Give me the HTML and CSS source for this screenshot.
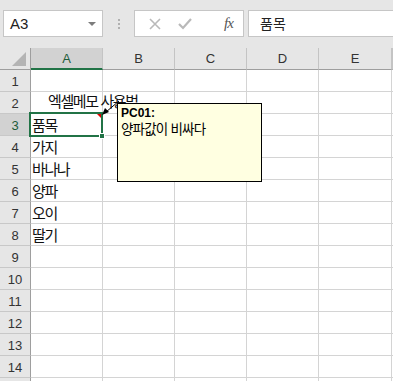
FILE: index.html
```
<!DOCTYPE html>
<html lang="ko">
<head>
    <meta charset="UTF-8">
    <meta name="viewport" content="width=device-width, initial-scale=1.0">
    <title>엑셀메모 사용법</title>
    <link rel="stylesheet" href="styles.css">
</head>
<body>
    <div class="app">
        <!-- Name box + formula bar -->
        <div class="toolbar">
            <div class="name-box">
                <span class="name-text">A3</span>
                <span class="name-arrow"></span>
            </div>
            <div class="grip"><i></i><i></i><i></i></div>
            <div class="fx-buttons">
                <svg class="fx-icon" width="12" height="12" viewBox="0 0 12 12">
                    <path d="M1 1 L11 11 M11 1 L1 11" stroke="#b9b9b9" stroke-width="1.6" fill="none"/>
                </svg>
                <svg class="fx-icon" width="14" height="12" viewBox="0 0 14 12">
                    <path d="M1 6 L5 10 L13 1" stroke="#b9b9b9" stroke-width="2.2" fill="none"/>
                </svg>
                <span class="fx-label">fx</span>
            </div>
            <div class="formula-input">품목</div>
        </div>

        <!-- Sheet grid -->
        <div class="sheet">
            <div class="hdr corner"><span class="corner-tri"></span></div>
            <div class="hdr col active">A</div>
            <div class="hdr col">B</div>
            <div class="hdr col">C</div>
            <div class="hdr col">D</div>
            <div class="hdr col">E</div>
            <div class="hdr col rest"></div>
        </div>

        <div class="selection"><span class="fill-handle"></span></div>
        <span class="comment-mark"></span>

        <svg class="arrow" width="30" height="22" viewBox="0 0 30 22">
            <path d="M19 2 L6 13" stroke="#000" stroke-width="1" fill="none"/>
            <path d="M2 16 L5 9 L9 13 Z" fill="#000"/>
        </svg>

        <div class="comment">
            <div class="comment-author">PC01:</div>
            <div class="comment-text">양파값이 비싸다</div>
        </div>
    </div>

    <script>
        // A열 데이터
        const cells = {
            2: '엑셀메모 사용법',
            3: '품목',
            4: '가지',
            5: '바나나',
            6: '양파',
            7: '오이',
            8: '딸기'
        };

        const sheet = document.querySelector('.sheet');
        let html = '';
        for (let r = 1; r <= 15; r++) {
            html += `<div class="hdr row${r === 3 ? ' active' : ''}">${r}</div>`;
            const text = cells[r] || '';
            html += `<div class="cell${r === 2 ? ' title' : ''}">${text}</div>`;
            html += '<div class="cell"></div><div class="cell"></div><div class="cell"></div><div class="cell"></div><div class="cell rest"></div>';
        }
        sheet.insertAdjacentHTML('beforeend', html);
    </script>
</body>
</html>
```

FILE: styles.css
```
:root {
    --excel-green: #217346;
    --grid: #d4d4d4;
    --header-bg: #e6e6e6;
    --header-line: #9e9e9e;
}

* {
    margin: 0;
    padding: 0;
    box-sizing: border-box;
}

body {
    font-family: 'Liberation Sans', 'Noto Sans CJK KR', sans-serif;
    background: white;
    color: #222;
    overflow: hidden;
}

.app {
    position: relative;
    width: 393px;
    height: 381px;
}

/* Toolbar */
.toolbar {
    height: 48px;
    background: var(--header-bg);
    display: flex;
    align-items: flex-start;
    padding-top: 10px;
}

.name-box {
    margin-left: 3px;
    width: 100px;
    height: 27px;
    background: white;
    border: 1px solid #c6c6c6;
    display: flex;
    align-items: center;
    justify-content: space-between;
    padding: 0 6px 0 6px;
}

.name-text {
    font-size: 15px;
    color: #222;
}

.name-arrow {
    width: 0;
    height: 0;
    border-left: 4px solid transparent;
    border-right: 4px solid transparent;
    border-top: 4px solid #7c7c7c;
}

.grip {
    width: 31px;
    height: 27px;
    display: flex;
    flex-direction: column;
    align-items: center;
    justify-content: center;
    gap: 2px;
}

.grip i {
    width: 2px;
    height: 2px;
    background: #b0b0b0;
}

.fx-buttons {
    width: 110px;
    height: 27px;
    background: white;
    border: 1px solid #c6c6c6;
    display: flex;
    align-items: center;
    padding-left: 14px;
    gap: 17px;
}

.fx-label {
    margin-left: 15px;
    font-family: 'Liberation Serif', serif;
    font-style: italic;
    font-size: 15px;
    color: #555;
    letter-spacing: -1px;
}

.formula-input {
    margin-left: 4px;
    flex: 1;
    height: 27px;
    background: white;
    border: 1px solid #c6c6c6;
    border-right: none;
    font-family: 'Noto Sans CJK KR', sans-serif;
    font-size: 14px;
    line-height: 25px;
    padding-left: 11px;
    color: #222;
}

/* Grid */
.sheet {
    display: grid;
    grid-template-columns: 31px 72px 72px 72px 72px 73px 1fr;
    grid-template-rows: 22px;
    grid-auto-rows: 22px;
}

.hdr {
    background: var(--header-bg);
    font-size: 13px;
    color: #333;
    display: flex;
    align-items: center;
    justify-content: center;
}

.hdr.col {
    border-right: 1px solid #c4c4c4;
    border-bottom: 1px solid var(--header-line);
}

.hdr.col.active {
    background: #d2d2d2;
    border-bottom: 2px solid var(--excel-green);
    color: #1e5c3a;
}

.hdr.corner {
    position: relative;
    border-right: 1px solid var(--header-line);
    border-bottom: 1px solid var(--header-line);
}

.corner-tri {
    position: absolute;
    right: 4px;
    bottom: 3px;
    width: 0;
    height: 0;
    border-left: 14px solid transparent;
    border-bottom: 14px solid #b4b4b4;
}

.hdr.row {
    border-right: 1px solid var(--header-line);
    border-bottom: 1px solid #c8c8c8;
    padding-top: 1px;
}

.hdr.row.active {
    background: #d2d2d2;
    color: #1e5c3a;
}

.cell {
    border-right: 1px solid var(--grid);
    border-bottom: 1px solid var(--grid);
    font-family: 'Noto Sans CJK KR', sans-serif;
    font-size: 15px;
    letter-spacing: -1.4px;
    color: #111;
    white-space: nowrap;
    display: flex;
    align-items: center;
    padding-left: 1px;
}

.cell.title {
    align-items: flex-start;
    padding-left: 17px;
    line-height: 18px;
}

.rest {
    border-right: none;
}

/* Overlays */
.selection {
    position: absolute;
    left: 29px;
    top: 112px;
    width: 74px;
    height: 25px;
    border: 2px solid var(--excel-green);
}

.fill-handle {
    position: absolute;
    right: -4px;
    bottom: -4px;
    width: 6px;
    height: 6px;
    background: var(--excel-green);
    border: 1px solid white;
}

.comment-mark {
    position: absolute;
    left: 97px;
    top: 114px;
    width: 0;
    height: 0;
    border-left: 4px solid transparent;
    border-top: 4px solid #e00000;
}

.arrow {
    position: absolute;
    left: 100px;
    top: 99px;
}

.comment {
    position: absolute;
    left: 117px;
    top: 103px;
    width: 145px;
    height: 79px;
    background: #ffffe1;
    border: 1px solid #000;
    padding: 2px 3px;
    color: #000;
}

.comment-author {
    font-family: 'Liberation Sans', sans-serif;
    font-weight: bold;
    font-size: 12px;
    line-height: 15px;
}

.comment-text {
    font-family: 'Noto Sans CJK KR', sans-serif;
    font-size: 13.5px;
    letter-spacing: -0.8px;
    line-height: 15px;
}
```
